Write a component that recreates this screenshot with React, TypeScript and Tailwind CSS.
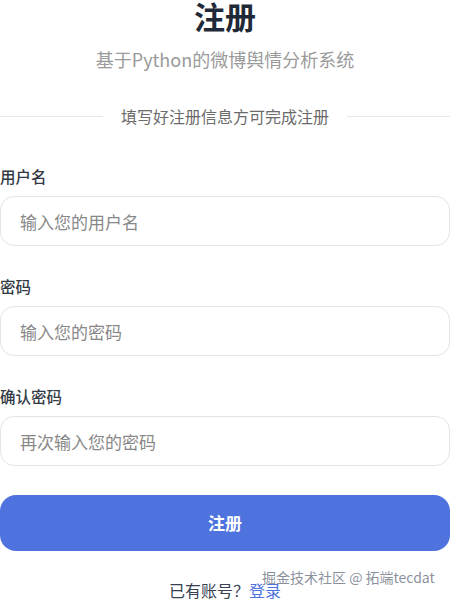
export default function App() {
  const font = { fontFamily: '"Noto Sans CJK SC", "Noto Sans", sans-serif' };

  const fields = [
    { label: "用户名", placeholder: "输入您的用户名", type: "text" },
    { label: "密码", placeholder: "输入您的密码", type: "password" },
    { label: "确认密码", placeholder: "再次输入您的密码", type: "password" },
  ];

  return (
    <main className="relative w-[450px] h-[599px] overflow-hidden bg-white" style={font}>
      {/* Header */}
      <h1 className="text-center text-[31px] font-bold leading-[31px] text-[#1f2937]">注册</h1>
      <p className="mt-[15px] text-center text-[18px] leading-[26px] text-[#9a9a9a]">
        基于Python的微博舆情分析系统
      </p>

      {/* Divider */}
      <div className="mt-[32px] flex items-center gap-[18px]">
        <div className="h-px flex-1 bg-[#e5e7eb]" />
        <span className="text-[16px] leading-[24px] text-[#6b6b6b]">填写好注册信息方可完成注册</span>
        <div className="h-px flex-1 bg-[#e5e7eb]" />
      </div>

      {/* Form */}
      <form className="mt-[37px] flex flex-col gap-[29px]">
        {fields.map((f) => (
          <div key={f.label}>
            <label className="block text-[15.5px] font-medium leading-[22px] text-[#333a44]">{f.label}</label>
            <input
              type={f.type}
              placeholder={f.placeholder}
              className="mt-[9px] block h-[50px] w-full rounded-[14px] border border-[#e1e4e8] bg-white px-[19px] text-[17px] text-[#374151] placeholder:text-[#888888] outline-none"
              style={font}
            />
          </div>
        ))}

        <button
          type="button"
          className="h-[56px] w-full rounded-[16px] bg-[#4e73df] text-[17px] font-bold text-white"
          style={font}
        >
          注册
        </button>
      </form>

      {/* Footer */}
      <p className="mt-[27px] text-center text-[16px] leading-[24px] text-[#374151]">
        已有账号？<a className="text-[#4e73df]">登录</a>
      </p>

      {/* Watermark */}
      <span className="absolute left-[262px] top-[566px] whitespace-nowrap text-[14px] leading-[22px] text-[#6b7280]/80">
        掘金技术社区 @ 拓端tecdat
      </span>
    </main>
  );
}
